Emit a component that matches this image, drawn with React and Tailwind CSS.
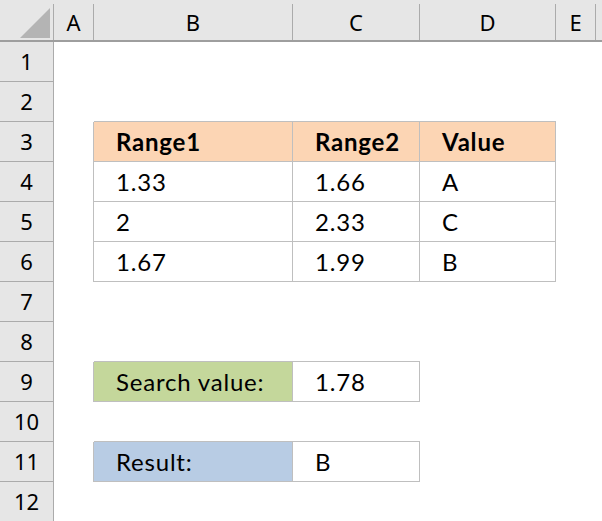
import React from "react";

const cols = [
  { key: "A", w: "w-[40px]" },
  { key: "B", w: "w-[199px]" },
  { key: "C", w: "w-[127px]" },
  { key: "D", w: "w-[136px]" },
  { key: "E", w: "w-[40px]" },
];

// cell contents and fills, keyed by "B3" etc.
const cells = {
  B3: { text: "Range1", bold: true, bg: "bg-[#fcd5b4]" },
  C3: { text: "Range2", bold: true, bg: "bg-[#fcd5b4]" },
  D3: { text: "Value", bold: true, bg: "bg-[#fcd5b4]" },
  B4: { text: "1.33" },
  C4: { text: "1.66" },
  D4: { text: "A" },
  B5: { text: "2" },
  C5: { text: "2.33" },
  D5: { text: "C" },
  B6: { text: "1.67" },
  C6: { text: "1.99" },
  D6: { text: "B" },
  B9: { text: "Search value:", bg: "bg-[#c4d79b]" },
  C9: { text: "1.78" },
  B11: { text: "Result:", bg: "bg-[#b8cce4]" },
  C11: { text: "B" },
};

// which cells draw a bottom / right border (shared Excel-style lines)
function hasBottom(col, row) {
  if (["B", "C", "D"].includes(col) && row >= 2 && row <= 6) return true;
  if (["B", "C"].includes(col) && [8, 9, 10, 11].includes(row)) return true;
  return false;
}

function hasRight(col, row) {
  if (["A", "B", "C", "D"].includes(col) && row >= 3 && row <= 6) return true;
  if (["A", "B", "C"].includes(col) && (row === 9 || row === 11)) return true;
  return false;
}

function Cell({ col, row }) {
  const c = cells[col.key + row];
  return (
    <div
      className={`${col.w} h-full shrink-0 flex items-center pl-[22px] pt-px whitespace-nowrap border-[#bfbfbf] ${
        hasBottom(col.key, row) ? "border-b" : ""
      } ${hasRight(col.key, row) ? "border-r" : ""} ${c && c.bg ? c.bg : ""} ${
        c && c.bold ? "font-bold" : ""
      }`}
    >
      {c ? c.text : ""}
    </div>
  );
}

export default function App() {
  const rows = Array.from({ length: 12 }, (_, i) => i + 1);

  return (
    <div className="w-[602px] h-[521px] overflow-hidden bg-white text-black font-['Lato',sans-serif] text-[24px] tracking-[0.8px]">
      {/* column headers */}
      <div className="flex h-[42px] pt-1 bg-[#e6e6e6] border-b-2 border-[#9e9e9e] font-['Noto_Sans',sans-serif] text-[22px] tracking-normal">
        <div className="w-[54px] shrink-0 border-r border-[#ababab] flex items-end justify-end pr-[3px] pb-[2px]">
          <svg width="30" height="30" viewBox="0 0 30 30">
            <polygon points="30,0 30,30 0,30" fill="#b4b4b4" />
          </svg>
        </div>
        {cols.map((col) => (
          <div
            key={col.key}
            className={`${col.w} shrink-0 border-r border-[#ababab] flex items-center justify-center`}
          >
            {col.key}
          </div>
        ))}
        <div className="flex-1" />
      </div>

      {/* rows */}
      {rows.map((row) => (
        <div key={row} className="flex h-10">
          <div className="w-[54px] shrink-0 bg-[#e6e6e6] border-r border-b border-[#ababab] flex items-center justify-center font-['Noto_Sans',sans-serif] text-[22px] tracking-normal">
            {row}
          </div>
          {cols.map((col) => (
            <Cell key={col.key} col={col} row={row} />
          ))}
          <div className="flex-1" />
        </div>
      ))}
    </div>
  );
}
